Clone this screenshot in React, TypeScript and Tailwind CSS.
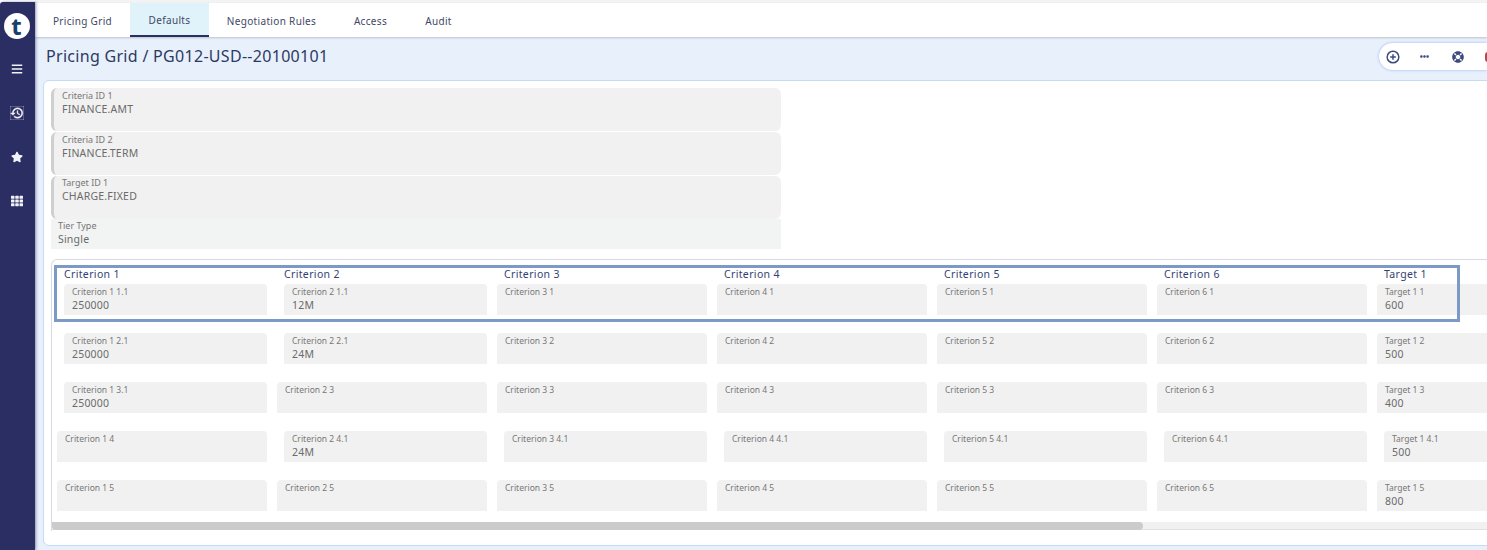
import React from "react";
import { FaBars, FaStar, FaTh, FaLifeRing, FaEllipsisH } from "react-icons/fa";
import { FiPlusCircle } from "react-icons/fi";
import { MdHistory } from "react-icons/md";

const font = { fontFamily: '"Noto Sans", sans-serif' };

type Cell = { l: string; v?: string; i?: boolean };
const c = (l: string, v?: string, i?: boolean): Cell => ({ l, v, i });

const headers = ["Criterion 1", "Criterion 2", "Criterion 3", "Criterion 4", "Criterion 5", "Criterion 6", "Target 1"];
const rows: Cell[][] = [
  [c("Criterion 1 1.1", "250000", true), c("Criterion 2 1.1", "12M", true), c("Criterion 3 1"), c("Criterion 4 1"), c("Criterion 5 1"), c("Criterion 6 1"), c("Target 1 1", "600")],
  [c("Criterion 1 2.1", "250000", true), c("Criterion 2 2.1", "24M", true), c("Criterion 3 2"), c("Criterion 4 2"), c("Criterion 5 2"), c("Criterion 6 2"), c("Target 1 2", "500")],
  [c("Criterion 1 3.1", "250000", true), c("Criterion 2 3"), c("Criterion 3 3"), c("Criterion 4 3"), c("Criterion 5 3"), c("Criterion 6 3"), c("Target 1 3", "400")],
  [c("Criterion 1 4"), c("Criterion 2 4.1", "24M", true), c("Criterion 3 4.1", undefined, true), c("Criterion 4 4.1", undefined, true), c("Criterion 5 4.1", undefined, true), c("Criterion 6 4.1", undefined, true), c("Target 1 4.1", "500", true)],
  [c("Criterion 1 5"), c("Criterion 2 5"), c("Criterion 3 5"), c("Criterion 4 5"), c("Criterion 5 5"), c("Criterion 6 5"), c("Target 1 5", "800")],
];

function GridCell({ cell }: { cell: Cell }) {
  return (
    <div className={`h-[31px] rounded-t-[4px] bg-[#f1f1f1] pl-2 pt-[2px] ${cell.i ? "ml-[7px]" : ""}`}>
      <div className="text-[8.5px] leading-[12px] text-[#777777]">{cell.l}</div>
      {cell.v && <div className="text-[10.5px] leading-[14px] tracking-[0.2px] text-[#6b6b6b]">{cell.v}</div>}
    </div>
  );
}

function IdField({ label, value, tight }: { label: string; value: string; tight?: boolean }) {
  return (
    <div className={`w-[730px] h-[43px] mb-px rounded-[6px] border-l-[3px] border-[#cfcfcf] bg-[#f1f1f1] pl-[8px] ${tight ? "pt-[1px]" : "pt-[2px]"}`}>
      <div className="text-[9px] leading-[12px] text-[#777777]">{label}</div>
      <div className="text-[10.5px] leading-[14px] tracking-[0.2px] text-[#6b6b6b]">{value}</div>
    </div>
  );
}

const tabs = [
  { t: "Pricing Grid", w: "w-[95px]" },
  { t: "Defaults", w: "w-[79px]" },
  { t: "Negotiation Rules", w: "w-[125px]" },
  { t: "Access", w: "w-[73px]" },
  { t: "Audit", w: "w-[63px]" },
];

export default function App() {
  return (
    <div style={font} className="w-[1487px] h-[550px] overflow-hidden flex bg-white">
      <aside className="w-[35px] shrink-0 bg-[#2a2e62] mt-[2px] rounded-tl-[3px] flex flex-col items-center pr-[2px] text-[#f2f3f8] shadow-[1px_0_3px_rgba(40,50,110,0.5)] z-10">
        <div className="mt-[11px] w-[26px] h-[26px] rounded-full bg-white flex items-center justify-center text-[#17406f] text-[24px] font-bold leading-none pb-[1px]">t</div>
        <FaBars className="mt-[24px] text-[12px]" />
        <MdHistory className="mt-[31px] text-[14px]" style={{ strokeWidth: 0.8, stroke: "currentColor" }} />
        <FaStar className="mt-[31px] text-[12px]" />
        <FaTh className="mt-[32px] text-[12px]" />
      </aside>
      <main className="flex-1 min-w-0 flex flex-col overflow-hidden bg-[#e8f0fc]">
        <div className="h-[3px] bg-[#f3f3f3]" />
        <nav className="h-[34px] bg-white flex shadow-[0_1px_2px_rgba(0,0,0,0.2)] z-[1]">
          {tabs.map((tab, i) => (
            <div key={tab.t} className={`${tab.w} flex items-center justify-center pt-[2px] text-[10px] tracking-[0.33px] text-[#3f4766] ${i === 1 ? "bg-[#e0f3fb] border-b-2 border-[#2a2e62]" : ""}`}>
              {tab.t}
            </div>
          ))}
        </nav>
        <header className="h-[43px] shrink-0 flex items-start justify-between pl-[11px] pt-[6px]">
          <h1 className="text-[16px] leading-[26px] tracking-[0.3px] text-[#2c3a63]">Pricing Grid / PG012-USD--20100101</h1>
          <div className="h-[27px] w-[108px] shrink-0 bg-white rounded-l-full shadow-[0_0_3px_rgba(130,170,235,0.8)] flex items-center pl-[7px] text-[#3c4a80]">
            <FiPlusCircle className="shrink-0 text-[14px]" style={{ strokeWidth: 2.5 }} />
            <FaEllipsisH className="shrink-0 ml-[20px] text-[9px]" />
            <FaLifeRing className="shrink-0 ml-[23px] text-[12px]" />
            <span className="shrink-0 ml-[21px] w-[6px] h-[10px] rounded-full bg-[#b5484f]" />
          </div>
        </header>
        <section className="ml-[8px] w-[1470px] shrink-0 h-[466px] bg-white border border-[#c5daf5] rounded-l-[6px] pl-[7px] pt-[7px]">
          <IdField label="Criteria ID 1" value="FINANCE.AMT" />
          <IdField label="Criteria ID 2" value="FINANCE.TERM" />
          <IdField label="Target ID 1" value="CHARGE.FIXED" tight />
          <div className="w-[730px] h-[30px] -mt-px bg-[#f2f3f3] pl-[7px] pt-[1px]">
            <div className="text-[9px] leading-[12px] text-[#777777]">Tier Type</div>
            <div className="text-[10.5px] leading-[14px] tracking-[0.2px] text-[#6b6b6b]">Single</div>
          </div>
          <div className="relative mt-[10px] h-[272px] border-l border-t border-[#d6d9e6] rounded-tl-[6px] overflow-hidden">
            <div className="pl-[5px] pt-[7px]">
              <div className="grid grid-cols-[repeat(7,210px)] gap-x-[10px]">
                {headers.map((h) => (
                  <div key={h} className="pl-[7px] h-[17px] text-[10.5px] leading-[15px] tracking-[0.35px] text-[#333f74]">{h}</div>
                ))}
              </div>
              <div className="grid grid-cols-[repeat(7,210px)] gap-x-[10px] gap-y-[18px]">
                {rows.map((r, i) => r.map((cell) => <GridCell key={`${i}${cell.l}`} cell={cell} />))}
              </div>
            </div>
            <div className="mt-[11px] h-[8px] bg-[#f1f1f1] border-b border-[#e0e0e0]">
              <div className="w-[1091px] h-[8px] rounded-b-[4px] rounded-tr-[4px] bg-[#cccbcb]" />
            </div>
            <div className="absolute left-[2px] top-[5px] w-[1406px] h-[57px] border-[3px] border-[#7b9ac8]" />
          </div>
        </section>
      </main>
    </div>
  );
}
